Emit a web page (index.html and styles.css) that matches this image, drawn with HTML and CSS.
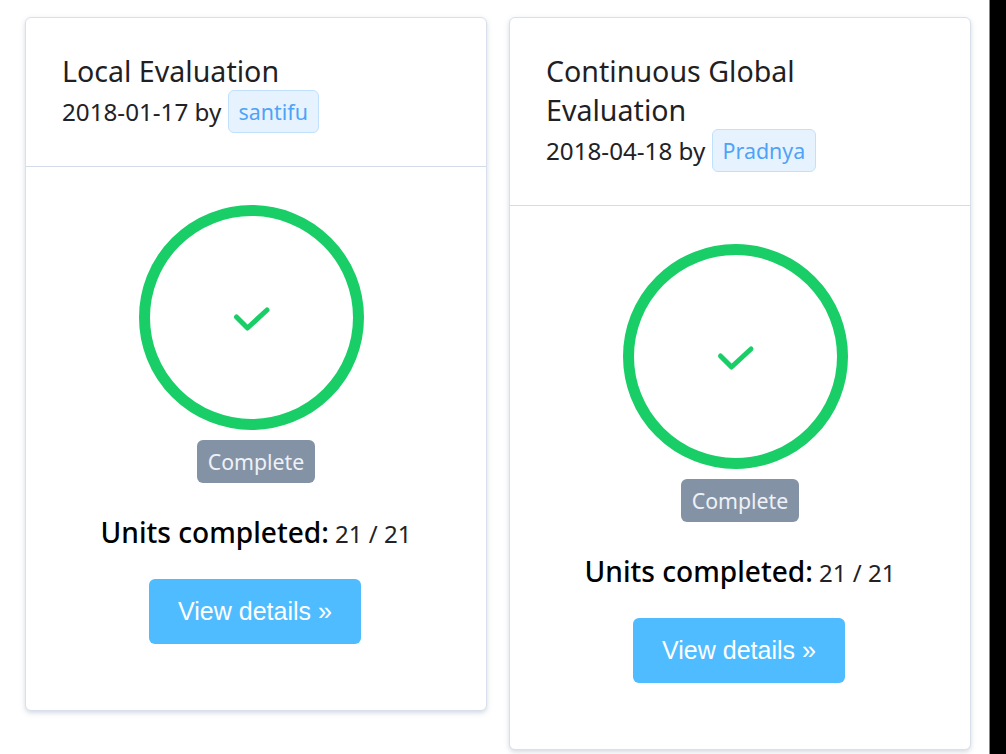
FILE: index.html
```html
<!DOCTYPE html>
<html lang="en">
<head>
<meta charset="utf-8">
<title>Evaluations</title>
<link rel="stylesheet" href="styles.css">
</head>
<body>
<div class="page">
  <main class="cards">
    <article class="card">
      <header class="card-head">
        <h2 class="title">Local Evaluation</h2>
        <div class="meta">2018-01-17 by <span class="user">santifu</span></div>
      </header>
      <section class="card-body">
        <div class="ring">
          <svg class="ring-svg" viewBox="0 0 225 225"><circle cx="112.5" cy="112.5" r="107" fill="none" stroke="#19ce67" stroke-width="11"/><path d="M97.500 112 L108.500 123 L128 105" fill="none" stroke="#19ce67" stroke-width="5" stroke-linecap="round" stroke-linejoin="round"/></svg>
        </div>
        <span class="status">Complete</span>
        <p class="units"><strong class="units-label">Units completed:</strong> 21 / 21</p>
        <a class="btn" href="#">View details »</a>
      </section>
    </article>
    <article class="card">
      <header class="card-head">
        <h2 class="title">Continuous Global Evaluation</h2>
        <div class="meta">2018-04-18 by <span class="user">Pradnya</span></div>
      </header>
      <section class="card-body">
        <div class="ring">
          <svg class="ring-svg" viewBox="0 0 225 225"><circle cx="112.5" cy="112.5" r="107" fill="none" stroke="#19ce67" stroke-width="11"/><path d="M97.500 112 L108.500 123 L128 105" fill="none" stroke="#19ce67" stroke-width="5" stroke-linecap="round" stroke-linejoin="round"/></svg>
        </div>
        <span class="status">Complete</span>
        <p class="units"><strong class="units-label">Units completed:</strong> 21 / 21</p>
        <a class="btn" href="#">View details »</a>
      </section>
    </article>
  </main>
  <div class="edge"></div>
</div>
</body>
</html>
```
FILE: styles.css
```css
* { box-sizing: border-box; }
html, body { margin: 0; height: 100%; overflow: hidden; background: #fff; }
body { font-family: "Noto Sans", "Open Sans", sans-serif; color: #222226; }
.page { display: flex; height: 754px; }
.cards { flex: 1; display: flex; align-items: flex-start; gap: 22px; padding: 17px 0 0 25px; }
.edge { width: 17px; background: #000; border-left: 1px solid #888; }
.card {
  width: 462px;
  background: #fff;
  border: 1.5px solid #d9e0eb;
  border-radius: 6px;
  box-shadow: 0 2px 5px rgba(132, 146, 166, .35);
}
.card-head { padding: 33px 36px 33px; border-bottom: 1.5px solid #d3dbe8; }
.title { margin: 0; font-size: 28.6px; font-weight: 400; line-height: 39px; color: #1f1f24; }
.meta { font-size: 24.2px; line-height: 39px; color: #222226; display: flex; align-items: center; height: 43px; white-space: pre; }
.user {
  display: block;
  height: 43px;
  line-height: 41px;
  padding: 0 10px;
  font-size: 21.4px;
  color: #4fa3f7;
  background: #e6f3ff;
  border: 1.5px solid #c0e0fc;
  border-radius: 6px;
}
.card-body { display: flex; flex-direction: column; align-items: center; padding: 38px 0 66px; }
.ring { width: 225px; height: 225px; margin-right: 9px; }
.ring-svg { display: block; width: 225px; height: 225px; }
.status {
  display: block;
  margin-top: 10px;
  height: 43px;
  line-height: 43px;
  padding: 0 11px;
  font-size: 21.3px;
  color: #eef1f6;
  background: #8492a6;
  border-radius: 6px;
}
.units { margin: 28px 0 0; height: 45px; font-size: 24px; line-height: 43px; color: #222226; white-space: nowrap; }
.units-label { font-size: 28.1px; font-weight: 500; color: #000; }
.btn {
  display: block;
  margin: 23px 2px 0 0;
  width: 212px;
  height: 65px;
  line-height: 65px;
  text-align: center;
  font-family: "Liberation Sans", Arial, sans-serif;
  font-size: 25px;
  color: #fff;
  text-decoration: none;
  background: #4fbcff;
  border-radius: 6px;
}
```
